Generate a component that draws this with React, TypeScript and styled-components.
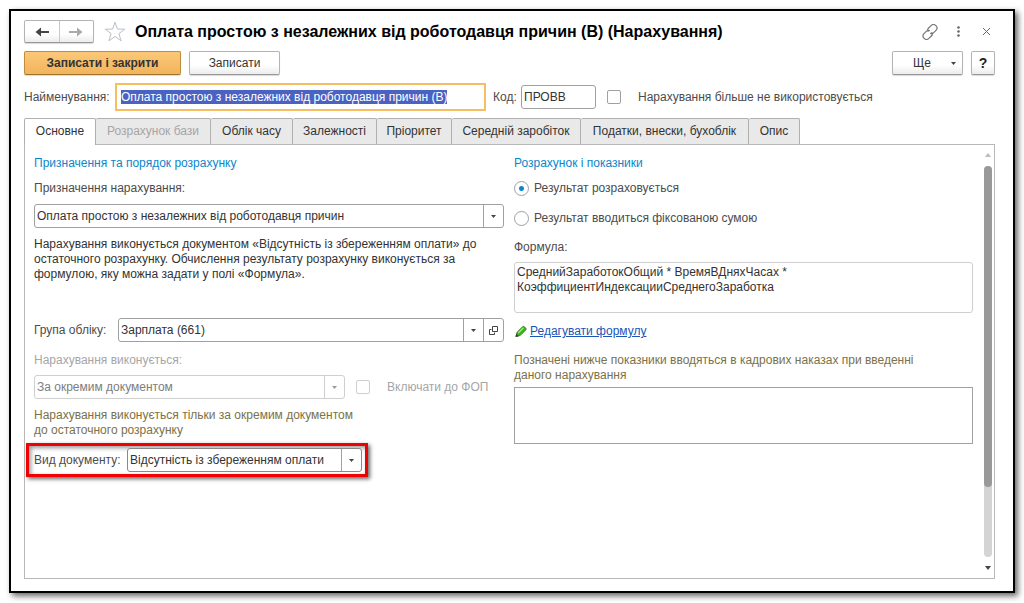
import React, { useEffect, useRef } from "react";
import styled, { createGlobalStyle, css } from "styled-components";

const GlobalStyle = createGlobalStyle`
  * { box-sizing: border-box; }
  body { margin: 0; background: #fff; }
  body, button, input, select, textarea {
    font-family: "Liberation Sans", Arial, sans-serif;
    font-size: 12px;
    line-height: 15px;
    color: #333;
  }
`;

const Page = styled.div`
  min-height: 100vh;
  padding: 9px 9px 10px;
  display: flex;
`;

const Window = styled.main`
  flex: 1;
  min-width: 0;
  display: flex;
  flex-direction: column;
  padding: 9px 18px 12px 13px;
  border: 2px solid #000;
  background: #fff;
  box-shadow: 3px 3px 6px rgba(0, 0, 0, 0.6);
`;

const TitleBar = styled.header`
  display: flex;
  align-items: center;
  height: 23px;
`;

const raised = css`
  border: 1px solid #b4b4b4;
  border-bottom-color: #989898;
  border-radius: 2px;
  background: linear-gradient(#fff 60%, #ececec);
  box-shadow: 0 1px 1px rgba(0, 0, 0, 0.15);
`;

const NavGroup = styled.nav`
  ${raised}
  display: flex;
  width: 70px;
  height: 23px;
`;

const NavButton = styled.button`
  flex: 1;
  display: flex;
  align-items: center;
  justify-content: center;
  padding: 0;
  border: 0;
  background: none;
  & + & { border-left: 1px solid #c8c8c8; }
`;

const IconButton = styled.button`
  display: flex;
  align-items: center;
  justify-content: center;
  width: 28px;
  height: 23px;
  padding: 0;
  border: 0;
  background: none;
`;

const StarButton = styled(IconButton)`
  width: 22px;
  margin: 0 9px 0 10px;
`;

const Title = styled.h1`
  flex: 1;
  margin: 0;
  font-size: 16px;
  line-height: 22px;
  font-weight: 700;
  color: #000;
  white-space: nowrap;
`;

const WindowTools = styled.div`
  display: flex;
  margin-right: -5px;
`;

const CommandBar = styled.div`
  display: flex;
  gap: 8px;
  margin-top: 8px;
`;

const Command = styled.button<{ $width: number; $primary?: boolean }>`
  ${raised}
  display: flex;
  align-items: center;
  justify-content: center;
  width: ${(p) => p.$width}px;
  height: 24px;
  padding: 0;
  ${(p) =>
    p.$primary &&
    css`
      border-color: #c08c40;
      border-bottom-color: #a0722c;
      background: linear-gradient(#fbc878, #f2b45c);
      font-weight: 700;
    `}
`;

const HelpMark = styled.strong`
  font-size: 14px;
  color: #222;
`;

const MoreLabel = styled.span`
  flex: 1;
`;

const MoreCaret = styled.span`
  display: flex;
  padding-right: 6px;
`;

const Spacer = styled.div`
  flex: 1;
`;

const NameRow = styled.div`
  display: flex;
  align-items: center;
  margin-top: 8px;
  height: 28px;
`;

const Label = styled.label<{ $width?: number; $muted?: boolean }>`
  display: block;
  flex: none;
  width: ${(p) => (p.$width ? `${p.$width}px` : "auto")};
  color: ${(p) => (p.$muted ? "#a6a6a6" : "#4c4c4c")};
  white-space: nowrap;
`;

const NameInput = styled.input`
  flex: 0 1 371px;
  min-width: 0;
  height: 28px;
  margin-right: 7px;
  padding: 0 4px;
  border: 2px solid #f6bd62;
  outline: 0;
  &::selection { background: #4a62c2; color: #fff; }
`;

const CodeInput = styled.input`
  width: 75px;
  height: 24px;
  margin-right: 11px;
  padding: 0 2px;
  border: 1px solid #a0a0a0;
  border-radius: 3px;
  outline: 0;
`;

const CheckBox = styled.input.attrs({ type: "checkbox" })`
  appearance: none;
  flex: none;
  width: 14px;
  height: 14px;
  margin: 0 17px 0 0;
  border: 1px solid #a0a0a0;
  border-radius: 2px;
  background: #fff;
  &:disabled { border-color: #cfcfcf; }
`;

const Tabs = styled.div`
  display: flex;
  margin-top: 7px;
`;

const Tab = styled.button<{ $width: number }>`
  flex: 0 1 ${(p) => p.$width}px;
  height: 26px;
  padding: 0;
  border: solid #b0b0b0;
  border-width: 1px 1px 0 0;
  border-radius: 2px 2px 0 0;
  background: #e9e9e9;
  white-space: nowrap;
  &:first-child { border-left-width: 1px; }
  &:disabled { color: #a6a6a6; }
  &[aria-selected="true"] {
    height: 27px;
    margin-bottom: -1px;
    padding-bottom: 1px;
    background: #fff;
    z-index: 1;
  }
`;

const Panel = styled.section`
  flex: 1;
  display: flex;
  border: 1px solid #b8b8b8;
  padding: 0 2px 0 9px;
`;

const Columns = styled.div`
  flex: 1;
  display: grid;
  grid-template-columns: 470fr 459fr;
  gap: 10px;
  align-content: start;
  padding-top: 11px;
`;

const Column = styled.div`
  min-width: 0;
`;

const SectionTitle = styled.h2`
  margin: 0 0 10px;
  font-size: 12px;
  line-height: 15px;
  font-weight: 400;
  color: #0a86cb;
`;

const ComboBox = styled.div<{ $buttons?: number; $muted?: boolean }>`
  --line: ${(p) => (p.$muted ? "#cfcfcf" : "#a0a0a0")};
  flex: 1;
  min-width: 0;
  display: grid;
  grid-template-columns: minmax(0, 1fr) repeat(${(p) => p.$buttons ?? 1}, 20px);
  height: 24px;
  border: 1px solid var(--line);
  border-radius: 3px;
  background: #fff;
`;

const ComboSelect = styled.select`
  appearance: none;
  grid-area: 1 / 1 / 2 / 3;
  padding: 0 22px 0 2px;
  border: 0;
  outline: 0;
  background: none;
  &:disabled { color: #7d7d7d; opacity: 1; }
`;

const ComboCaret = styled.span`
  grid-area: 1 / 2 / 2 / 3;
  display: flex;
  align-items: center;
  justify-content: center;
  border-left: 1px solid var(--line);
  pointer-events: none;
`;

const ComboOpen = styled.button`
  grid-area: 1 / 3 / 2 / 4;
  display: flex;
  align-items: center;
  justify-content: center;
  padding: 0;
  border: 0;
  border-left: 1px solid var(--line);
  background: none;
`;

const Description = styled.p`
  min-height: 75px;
  margin: 9px 0 6px;
`;

const Row = styled.div`
  display: flex;
  align-items: center;
`;

const PurposeRow = styled(Row)`
  margin-top: 8px;
`;

const ExecutionLabel = styled(Label)`
  margin-top: 11px;
`;

const ExecutionRow = styled(Row)`
  margin: 7px 0 9px;
  padding-right: 12px;
  & > ${ComboBox} { margin-right: 11px; }
`;

const Note = styled.p`
  display: block;
  margin: 0;
  color: #7a7248;
`;

const Highlight = styled(Row)`
  width: 342px;
  height: 34px;
  margin: 5px 0 0 -8px;
  padding: 0 3px 0 5px;
  border: 3px solid #f00000;
  box-shadow: 2px 2px 4px rgba(0, 0, 0, 0.6), inset 2px 2px 4px rgba(0, 0, 0, 0.4);
  & > ${ComboBox} { border-color: #888; }
`;

const RadioGroup = styled.div`
  display: grid;
  gap: 15px;
  margin-bottom: 14px;
`;

const RadioRow = styled.label`
  display: flex;
  align-items: center;
  gap: 5px;
  color: #4c4c4c;
`;

const Radio = styled.input.attrs({ type: "radio" })`
  appearance: none;
  flex: none;
  width: 15px;
  height: 15px;
  margin: 0;
  border: 1px solid #a0a0a0;
  border-radius: 50%;
  &:checked { background: radial-gradient(circle, #0a86cb 2px, #fff 3px); }
`;

const Formula = styled.textarea`
  display: block;
  width: 100%;
  height: 51px;
  margin: 7px 0 11px;
  padding: 2px;
  border: 1px solid #cfcfcf;
  border-radius: 3px;
  outline: 0;
  resize: none;
`;

const EditLink = styled.a`
  color: #1a55b8;
  text-decoration: underline;
`;

const LinkRow = styled(Row)`
  gap: 2px;
  margin-bottom: 14px;
`;

const Indicators = styled.textarea`
  display: block;
  width: 100%;
  height: 57px;
  margin-top: 4px;
  padding: 2px;
  border: 1px solid #a0a0a0;
  outline: 0;
  resize: none;
`;

const ScrollBar = styled.div`
  width: 8px;
  margin-left: 11px;
  display: flex;
  flex-direction: column;
  align-items: center;
  padding: 8px 0;
`;

const Track = styled.div`
  flex: 1;
  width: 8px;
  margin: 9px 0;
  border-radius: 4px;
  background: #d4d4d4;
`;

const Thumb = styled.div`
  height: 82%;
  border-radius: 4px;
  background: #999;
`;

const Caret = ({ color = "#444" }: { color?: string }) => (
  <svg width="5" height="3" viewBox="0 0 5 3" aria-hidden="true">
    <path d="M0 0h5L2.5 3z" fill={color} />
  </svg>
);

const ArrowIcon = ({ color, forward }: { color: string; forward?: boolean }) => (
  <svg width="14" height="10" viewBox="0 0 14 10" aria-hidden="true">
    <path
      d={forward ? "M0 4h8V0.500L13.500 5 8 9.500V6H0z" : "M14 4H6V0.500L.5 5 6 9.500V6h8z"}
      fill={color}
    />
  </svg>
);

type ComboProps = {
  id: string;
  value: string;
  disabled?: boolean;
  openable?: boolean;
};

const Combo = ({ id, value, disabled, openable }: ComboProps) => (
  <ComboBox $buttons={openable ? 2 : 1} $muted={disabled}>
    <ComboSelect id={id} disabled={disabled} defaultValue={value}>
      <option>{value}</option>
    </ComboSelect>
    <ComboCaret>
      <Caret color={disabled ? "#999" : "#444"} />
    </ComboCaret>
    {openable && (
      <ComboOpen type="button" aria-label="Відкрити">
        <svg width="9" height="9" viewBox="0 0 9 9" fill="none" stroke="#444" aria-hidden="true">
          <path d="M3.500.5h5v5h-5zM2.500 3.500h-2v5h5v-2" />
        </svg>
      </ComboOpen>
    )}
  </ComboBox>
);

const tabs = [
  { title: "Основне", width: 72 },
  { title: "Розрахунок бази", width: 115, disabled: true },
  { title: "Облік часу", width: 82 },
  { title: "Залежності", width: 84 },
  { title: "Пріоритет", width: 75 },
  { title: "Середній заробіток", width: 129 },
  { title: "Податки, внески, бухоблік", width: 168 },
  { title: "Опис", width: 51 },
];

export default function App() {
  const nameRef = useRef<HTMLInputElement>(null);
  useEffect(() => {
    nameRef.current?.focus();
    nameRef.current?.select();
  }, []);

  return (
    <Page>
      <GlobalStyle />
      <Window>
        <TitleBar>
          <NavGroup aria-label="Навігація">
            <NavButton type="button" aria-label="Назад"><ArrowIcon color="#444" /></NavButton>
            <NavButton type="button" aria-label="Вперед"><ArrowIcon color="#aaa" forward /></NavButton>
          </NavGroup>
          <StarButton type="button" aria-label="В обране">
            <svg width="22" height="21" viewBox="0 0 22 21" aria-hidden="true">
              <path d="M11 1.200l2.400 6.900 7.400.1-5.900 4.400 2.200 7.200L11 15.500l-6.100 4.300 2.200-7.200L1.200 8.200l7.400-.1z" fill="#fff" stroke="#b9c0c9" />
            </svg>
          </StarButton>
          <Title>Оплата простою з незалежних від роботодавця причин (В) (Нарахування)</Title>
          <WindowTools>
            <IconButton type="button" aria-label="Посилання">
              <svg width="16" height="16" viewBox="0 0 16 16" fill="none" stroke="#777" strokeWidth="1.200" strokeLinecap="round" aria-hidden="true">
                <path d="M6.200 7.200c-.7-1.100-.5-2.300.4-3.200l2.500-2.400c1.400-1.300 3.500-1.200 4.800.1s1.400 3.300.1 4.600l-2.500 2.500c-.8.800-1.900 1-2.900.6M9.800 8.600c.7 1.100.5 2.500-.4 3.400l-2.500 2.400c-1.400 1.300-3.500 1.200-4.800-.1s-1.400-3.300-.1-4.600l2.500-2.500c.8-.8 1.900-1 2.900-.6" />
              </svg>
            </IconButton>
            <IconButton type="button" aria-label="Меню">
              <svg width="3" height="11" viewBox="0 0 3 11" fill="#666" aria-hidden="true">
                <circle cx="1.500" cy="1.500" r="1.300" /><circle cx="1.500" cy="5.500" r="1.300" /><circle cx="1.500" cy="9.500" r="1.300" />
              </svg>
            </IconButton>
            <IconButton type="button" aria-label="Закрити">
              <svg width="7" height="7" viewBox="0 0 7 7" stroke="#666" aria-hidden="true">
                <path d="M0 0l7 7M7 0L0 7" />
              </svg>
            </IconButton>
          </WindowTools>
        </TitleBar>

        <CommandBar>
          <Command type="button" $width={157} $primary>Записати і закрити</Command>
          <Command type="button" $width={91}>Записати</Command>
          <Spacer />
          <Command type="button" $width={71}>
            <MoreLabel>Ще</MoreLabel>
            <MoreCaret><Caret /></MoreCaret>
          </Command>
          <Command type="button" $width={24} aria-label="Довідка"><HelpMark>?</HelpMark></Command>
        </CommandBar>

        <NameRow>
          <Label htmlFor="name" $width={91}>Найменування:</Label>
          <NameInput id="name" ref={nameRef} defaultValue="Оплата простою з незалежних від роботодавця причин (В)" />
          <Label htmlFor="code" $width={28}>Код:</Label>
          <CodeInput id="code" defaultValue="ПРОВВ" />
          <CheckBox id="unused" />
          <Label htmlFor="unused">Нарахування більше не використовується</Label>
        </NameRow>

        <Tabs role="tablist">
          {tabs.map((t, i) => (
            <Tab key={t.title} type="button" role="tab" aria-selected={i === 0} disabled={t.disabled} $width={t.width}>
              {t.title}
            </Tab>
          ))}
        </Tabs>

        <Panel role="tabpanel">
          <Columns>
            <Column>
              <SectionTitle>Призначення та порядок розрахунку</SectionTitle>
              <Label htmlFor="purpose">Призначення нарахування:</Label>
              <PurposeRow>
                <Combo id="purpose" value="Оплата простою з незалежних від роботодавця причин" />
              </PurposeRow>
              <Description>
                Нарахування виконується документом «Відсутність із збереженням оплати» до
                остаточного розрахунку. Обчислення результату розрахунку виконується за
                формулою, яку можна задати у полі «Формула».
              </Description>
              <Row>
                <Label htmlFor="group" $width={84}>Група обліку:</Label>
                <Combo id="group" value="Зарплата (661)" openable />
              </Row>
              <ExecutionLabel htmlFor="execution" $muted>Нарахування виконується:</ExecutionLabel>
              <ExecutionRow>
                <Combo id="execution" value="За окремим документом" disabled />
                <CheckBox id="payroll" disabled />
                <Label htmlFor="payroll" $width={105} $muted>Включати до ФОП</Label>
              </ExecutionRow>
              <Note>
                Нарахування виконується тільки за окремим документом<br />
                до остаточного розрахунку
              </Note>
              <Highlight>
                <Label htmlFor="document" $width={93}>Вид документу:</Label>
                <Combo id="document" value="Відсутність із збереженням оплати" />
              </Highlight>
            </Column>

            <Column>
              <SectionTitle>Розрахунок і показники</SectionTitle>
              <RadioGroup role="radiogroup">
                <RadioRow>
                  <Radio name="result" defaultChecked />
                  Результат розраховується
                </RadioRow>
                <RadioRow>
                  <Radio name="result" />
                  Результат вводиться фіксованою сумою
                </RadioRow>
              </RadioGroup>
              <Label htmlFor="formula">Формула:</Label>
              <Formula
                id="formula"
                readOnly
                defaultValue={"СреднийЗаработокОбщий * ВремяВДняхЧасах *\nКоэффициентИндексацииСреднегоЗаработка"}
              />
              <LinkRow>
                <svg width="14" height="14" viewBox="0 0 14 14" aria-hidden="true">
                  <path d="M2 11.500l1-4.200L8.500 1.800c.6-.6 1.300-.6 1.900 0l1.300 1.300c.6.600.6 1.300 0 1.900L6.200 10.500z" fill="#3cb521" stroke="#1f7a12" strokeWidth=".8" />
                  <path d="M4.200 8l5.200-5.200" stroke="#a5ea86" strokeWidth="1.300" />
                  <path d="M1.500 12l.8-3.200 2.400 2.400z" fill="#3a3a2a" />
                </svg>
                <EditLink href="#formula">Редагувати формулу</EditLink>
              </LinkRow>
              <Note as="label" htmlFor="indicators">
                Позначені нижче показники вводяться в кадрових наказах при введенні
                <br />
                даного нарахування
              </Note>
              <Indicators id="indicators" />
            </Column>
          </Columns>
          <ScrollBar aria-hidden="true">
            <svg width="6" height="4" viewBox="0 0 6 4"><path d="M0 4h6L3 0z" fill="#bbb" /></svg>
            <Track><Thumb /></Track>
            <svg width="6" height="4" viewBox="0 0 6 4"><path d="M0 0h6L3 4z" fill="#444" /></svg>
          </ScrollBar>
        </Panel>
      </Window>
    </Page>
  );
}
